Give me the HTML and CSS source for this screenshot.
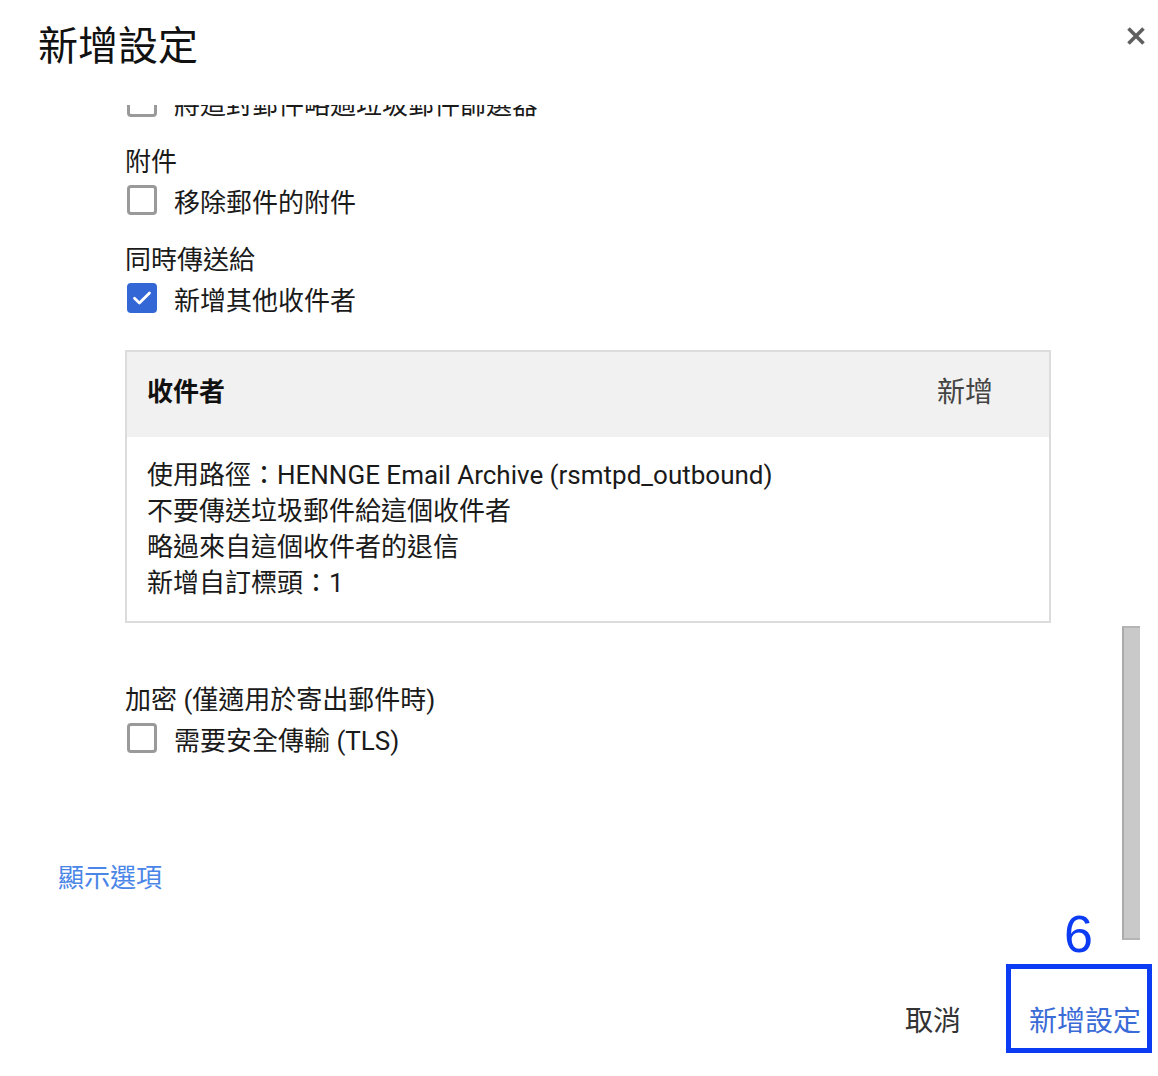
FILE: index.html
```html
<!DOCTYPE html>
<html lang="zh-Hant">
<head>
<meta charset="utf-8">
<title>新增設定</title>
<link rel="stylesheet" href="styles.css">
</head>
<body>
<div class="dialog">
  <header class="dlg-head">
    <h1 class="title">新增設定</h1>
    <button class="close" aria-label="關閉">
      <svg width="20" height="20" viewBox="0 0 20 20"><path d="M2.5 2.5 L17.5 17.5 M17.5 2.5 L2.5 17.5" stroke="#5f5f5f" stroke-width="3.6" stroke-linecap="butt"/></svg>
    </button>
  </header>

  <div class="scroll">
    <div class="content">
      <div class="sections">
        <label class="row first"><span class="cb"></span><span>將這封郵件略過垃圾郵件篩選器</span></label>

        <div class="section">
          <div class="label">附件</div>
          <label class="row"><span class="cb"></span><span>移除郵件的附件</span></label>
        </div>

        <div class="section">
          <div class="label">同時傳送給</div>
          <label class="row"><span class="cb checked"><svg width="20" height="16" viewBox="0 0 20 16"><path d="M2.5 8.2 L7.4 13 L17.5 3" fill="none" stroke="#fff" stroke-width="2.8" stroke-linecap="round" stroke-linejoin="round"/></svg></span><span>新增其他收件者</span></label>
        </div>

        <div class="rcpt">
          <div class="rcpt-head">
            <span class="rcpt-title">收件者</span>
            <span class="rcpt-add">新增</span>
          </div>
          <div class="rcpt-body">
            <div>使用路徑：HENNGE Email Archive (rsmtpd_outbound)</div>
            <div>不要傳送垃圾郵件給這個收件者</div>
            <div>略過來自這個收件者的退信</div>
            <div>新增自訂標頭：1</div>
          </div>
        </div>

        <div class="section enc">
          <div class="label">加密 (僅適用於寄出郵件時)</div>
          <label class="row"><span class="cb"></span><span>需要安全傳輸 (TLS)</span></label>
        </div>
      </div>
      <a class="show-opts" href="#">顯示選項</a>
    </div>
    <div class="thumb"></div>
  </div>

  <footer class="dlg-foot">
    <button class="btn cancel">取消</button>
    <button class="btn primary">新增設定</button>
  </footer>

  <div class="anno-num">6</div>
  <div class="anno-box"></div>
</div>
</body>
</html>
```

FILE: styles.css
```css
* { box-sizing: border-box; }
html, body {
  margin: 0;
  padding: 0;
  background: #fff;
}
body {
  font-family: Roboto, "Noto Sans CJK TC", "Noto Sans", sans-serif;
  color: #202020;
  width: 1158px;
  height: 1076px;
  overflow: hidden;
}
.dialog {
  position: relative;
  width: 1158px;
  height: 1076px;
  display: flex;
  flex-direction: column;
}
.dlg-head {
  height: 105px;
  flex: none;
  display: flex;
  justify-content: space-between;
  align-items: flex-start;
  padding-left: 38px;
}
.title {
  margin: 0;
  margin-top: 23px;
  font-size: 40px;
  line-height: 48px;
  font-weight: 400;
  color: #111;
}
.close {
  border: 0;
  background: none;
  padding: 0;
  margin: 26px 12px 0 0;
  width: 20px;
  height: 20px;
  display: flex;
}
.scroll {
  position: relative;
  flex: none;
  height: 840px;
  overflow: hidden;
}
.content {
  padding-bottom: 40px;
}
.sections {
  padding-left: 125px;
  width: 1050px;
}
.row {
  display: flex;
  align-items: center;
  height: 40px;
  font-size: 26px;
  gap: 17px;
  color: #1a1a1a;
}
.row.first {
  margin-top: -23px;
}
.cb {
  flex: none;
  width: 30px;
  height: 30px;
  border: 3px solid #9a9a9a;
  border-radius: 4px;
  margin-left: 2px;
  background: #fff;
  display: flex;
  align-items: center;
  justify-content: center;
}
.cb.checked {
  background: #3367d6;
  border-color: #3367d6;
}
.section {
  margin-top: 22px;
}
.label {
  font-size: 26px;
  line-height: 36px;
  color: #1a1a1a;
}
.rcpt {
  margin-top: 32px;
  border: 2px solid #dcdcdc;
  width: 926px;
}
.rcpt-head {
  height: 85px;
  background: #f1f1f1;
  display: flex;
  align-items: center;
  justify-content: space-between;
  padding: 0 56px 10px 20px;
  font-size: 26px;
}
.rcpt-title {
  font-weight: 700;
  color: #111;
}
.rcpt-add {
  color: #444;
  font-size: 28px;
}
.rcpt-body {
  padding: 20px 20px;
  font-size: 26px;
  line-height: 36px;
  color: #1a1a1a;
}
.section.enc {
  margin-top: 59px;
}
.show-opts {
  display: block;
  margin-top: 102px;
  margin-left: 58px;
  width: max-content;
  font-size: 26px;
  line-height: 36px;
  color: #4a86e8;
  text-decoration: none;
}
.thumb {
  position: absolute;
  right: 18px;
  top: 521px;
  width: 18px;
  height: 314px;
  background: #c9c9c9;
  border-left: 2px solid #ababab;
  border-top: 2px solid #b5b5b5;
  border-bottom: 2px solid #b5b5b5;
}
.dlg-foot {
  flex: 1;
  display: flex;
  justify-content: flex-end;
  align-items: flex-start;
  padding-top: 57px;
  padding-right: 0;
}
.btn {
  border: 0;
  background: none;
  font-family: inherit;
  font-size: 28px;
  line-height: 40px;
  padding: 0 17px;
  cursor: pointer;
}
.btn.cancel {
  color: #333;
  margin-right: 34px;
}
.btn.primary {
  color: #3a6bd6;
}
.anno-num {
  position: absolute;
  left: 1064px;
  top: 908px;
  font-family: "Liberation Sans", Arial, sans-serif;
  font-size: 52px;
  line-height: 52px;
  color: #0b3bf2;
}
.anno-box {
  position: absolute;
  left: 1006px;
  top: 964px;
  width: 146px;
  height: 89px;
  border: 5px solid #0b3bf2;
}
```
